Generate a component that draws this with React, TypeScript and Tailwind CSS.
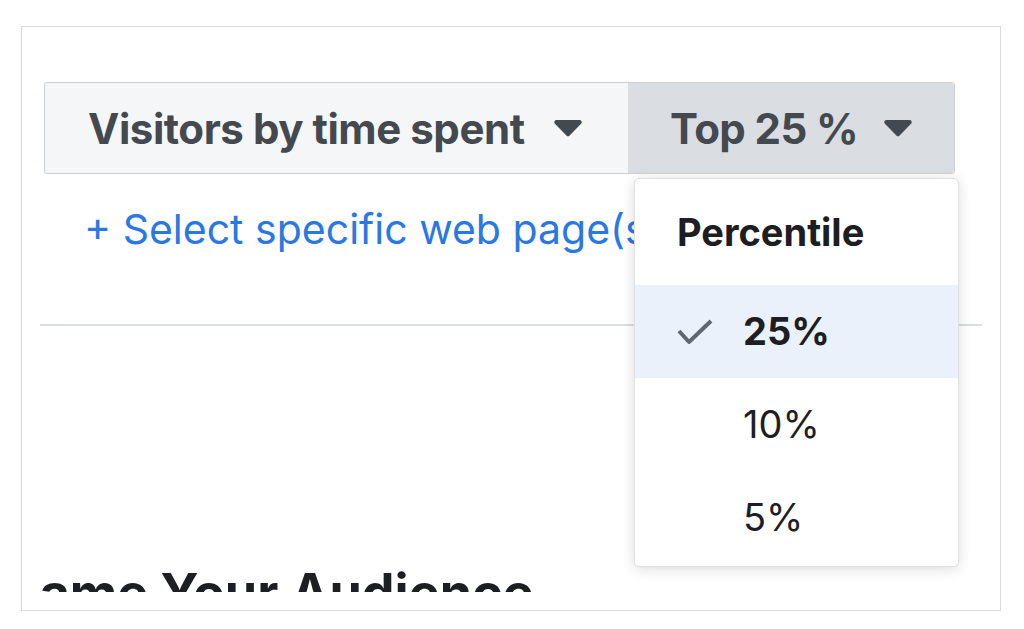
import React from "react";

const Caret = () => (
  <svg width="30" height="18" viewBox="0 0 30 18" className="shrink-0">
    <path
      d="M3.5 1h23a2.2 2.2 0 0 1 1.6 3.7L16.6 16.4a2.2 2.2 0 0 1-3.2 0L1.9 4.7A2.2 2.2 0 0 1 3.5 1z"
      fill="#444950"
    />
  </svg>
);

const Check = () => (
  <svg width="36" height="27" viewBox="0 0 36 27" className="shrink-0">
    <polyline
      points="2,13 12,24 34,3"
      fill="none"
      stroke="#606770"
      strokeWidth="4"
      strokeLinejoin="round"
    />
  </svg>
);

const options = [
  { label: "25%", selected: true },
  { label: "10%", selected: false },
  { label: "5%", selected: false },
];

export default function App() {
  return (
    <div className="w-[1024px] h-[629px] bg-white pl-[21px] pt-[26px] font-['Inter',sans-serif]">
      <div className="w-[980px] h-[585px] border border-[#dadada] pl-[18px] pb-[18px] flex flex-col">
        <div className="relative flex-1 w-[942px] overflow-hidden flex flex-col">
          {/* segmented selector */}
          <div className="relative ml-[4px] mt-[55px] w-[911px] h-[92px] flex border border-[#ccd0d5] rounded-[3px] shrink-0">
            <div className="w-[583px] bg-[#f5f6f7] flex items-center pl-[43px] gap-[28px] rounded-l-[3px]">
              <span className="text-[42px] font-bold text-[#444950] tracking-[-0.45px]">
                Visitors by time spent
              </span>
              <Caret />
            </div>
            <div className="flex-1 bg-[#dadde1] flex items-center pl-[42px] gap-[25px] rounded-r-[3px]">
              <span className="text-[42px] font-bold text-[#444950] tracking-[-0.6px]">
                Top 25 %
              </span>
              <Caret />
            </div>

            <div className="absolute left-[589px] top-[95px] w-[325px] h-[389px] bg-white border border-[#dddfe2] rounded-[5px] shadow-[0_2px_14px_rgba(0,0,0,0.14)] z-10 flex flex-col">
              <div className="h-[106px] flex items-center pl-[42px] text-[38px] font-bold text-[#1c1e21]">
                Percentile
              </div>
              {options.map((o) => (
                <div
                  key={o.label}
                  className={
                    "h-[93px] flex items-center pl-[42px] gap-[30px] text-[38px] text-[#1c1e21] " +
                    (o.selected ? "bg-[#ebf1fb] font-bold" : "font-normal")
                  }
                >
                  <span className={o.selected ? "" : "invisible"}>
                    <Check />
                  </span>
                  <span>{o.label}</span>
                </div>
              ))}
            </div>
          </div>

          <a className="ml-[44px] mt-[31px] text-[41px] text-[#2a78e4] leading-[1.2] whitespace-nowrap">
            + Select specific web page(s)
          </a>

          <div className="mt-[70px] h-[2px] w-full bg-[#dadde1] shrink-0" />

          <h2 className="mt-auto mb-[-27px] ml-[-40px] text-[52px] leading-none font-bold text-[#1c1e21] whitespace-nowrap">
            Name Your Audience
          </h2>
        </div>
      </div>
    </div>
  );
}
